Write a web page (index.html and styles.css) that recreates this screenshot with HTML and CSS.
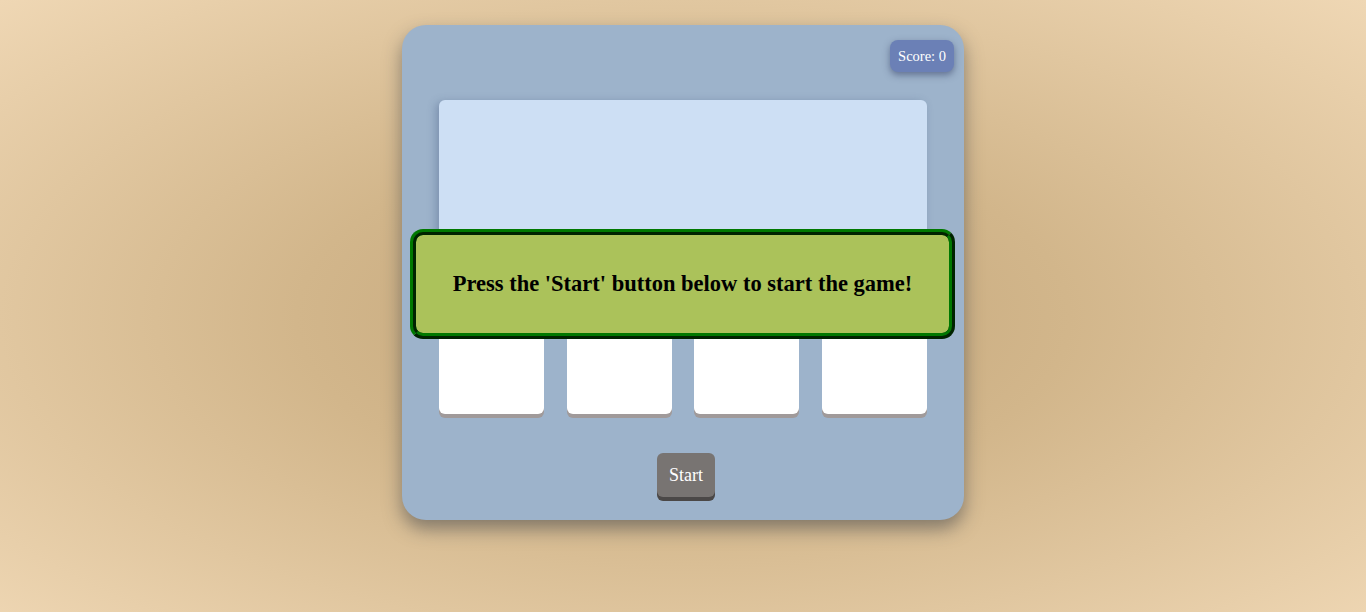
FILE: index.html
```html
<!DOCTYPE html>
<html>
<head>
<meta charset="utf-8">
<link rel="stylesheet" href="styles.css">
</head>
<body>
<div class="page">
  <div class="game">
    <div class="score">Score: 0</div>
    <div class="board">
      <div class="display"></div>
      <div class="cards">
        <div class="card"></div>
        <div class="card"></div>
        <div class="card"></div>
        <div class="card"></div>
      </div>
    </div>
    <div class="controls">
      <button class="start">Start</button>
    </div>
    <div class="overlay">Press the 'Start' button below to start the game!</div>
  </div>
</div>
</body>
</html>
```
FILE: styles.css
```css
html, body {
  margin: 0;
  height: 100%;
}
body {
  font-family: "Liberation Serif", "Times New Roman", serif;
  background: radial-gradient(ellipse at 50% 52%, #c3a579 0%, #d2b68b 40%, #efd7b4 100%);
  overflow: hidden;
}
.page {
  display: flex;
  justify-content: center;
  padding-top: 25px;
}
.game {
  position: relative;
  box-sizing: border-box;
  width: 562px;
  height: 495px;
  background: #9db3cb;
  border-radius: 24px;
  box-shadow: 0 9px 18px rgba(50, 55, 65, 0.5);
  padding: 75px 37px 0 37px;
}
.score {
  position: absolute;
  top: 15px;
  right: 10px;
  background: #6b80b6;
  color: #fff;
  font-size: 14.5px;
  padding: 8px 8px 7px;
  border-radius: 8px;
  box-shadow: 0 3px 7px rgba(40, 50, 90, 0.5);
}
.board {
  display: flex;
  flex-direction: column;
}
.display {
  height: 200px;
  background: #cddff4;
  border-radius: 6px;
  box-shadow: -3px 2px 8px rgba(60, 80, 120, 0.35);
}
.cards {
  display: flex;
  justify-content: space-between;
  margin-top: 10px;
}
.card {
  width: 105px;
  height: 104px;
  background: #fff;
  border-radius: 6px;
  box-shadow: 0 4px 0 #a09a9a;
}
.controls {
  display: flex;
  justify-content: center;
  margin-top: 39px;
  padding-left: 6px;
}
.start {
  font-family: "Liberation Serif", "Times New Roman", serif;
  font-size: 18px;
  color: #fff;
  background: #787472;
  border: none;
  border-radius: 6px;
  width: 58px;
  height: 44px;
  padding: 0;
  box-shadow: 0 4px 0 #4b4847;
}
.overlay {
  position: absolute;
  left: 8px;
  top: 204px;
  box-sizing: border-box;
  width: 545px;
  height: 110px;
  background: #abc25a;
  border: 6px ridge #007800;
  border-radius: 13px;
  display: flex;
  align-items: center;
  justify-content: center;
  font-weight: bold;
  font-size: 22.5px;
  color: #000;
}
```
